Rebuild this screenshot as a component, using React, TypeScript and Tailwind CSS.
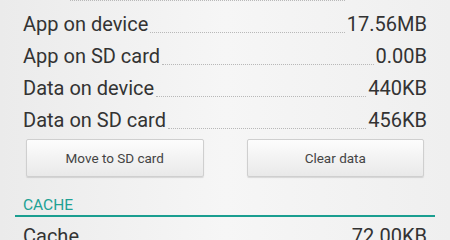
const rows = [
  { label: "Total", value: "18.00MB" },
  { label: "App on device", value: "17.56MB" },
  { label: "App on SD card", value: "0.00B" },
  { label: "Data on device", value: "440KB" },
  { label: "Data on SD card", value: "456KB" },
]

const SizeRow = ({ label, value }: { label: string; value: string }) => {
  return (
    <div className="flex flex-row items-baseline h-[32px] leading-[32px] text-[20px] text-[#333333]">
      <span className="whitespace-nowrap">{label}</span>
      <div className="flex-1 h-0 mx-[2px] border-b border-dotted border-[#b8b8b8] relative top-[2px]" />
      <span className="whitespace-nowrap">{value}</span>
    </div>
  )
}

const HoloButton = ({ children }: { children: string }) => {
  return (
    <button className="flex-1 h-[38px] rounded-[2px] border border-[#cfcfcf] bg-gradient-to-b from-[#fdfdfd] to-[#e9e9e9] shadow-[0_1px_1px_rgba(0,0,0,0.12)] text-[13.5px] text-[#444444]">
      {children}
    </button>
  )
}

export default function App() {
  return (
    <div className="w-[450px] h-[240px] overflow-hidden bg-gradient-to-r from-[#ebebeb] via-[#f6f6f6] to-[#efefef] font-['Roboto',sans-serif]">
      <div className="px-[23px] -mt-[24px]">
        {rows.map((row) => (
          <SizeRow key={row.label} label={row.label} value={row.value} />
        ))}
        <div className="flex flex-row gap-[43px] mx-[3px] mt-[3px]">
          <HoloButton>Move to SD card</HoloButton>
          <HoloButton>Clear data</HoloButton>
        </div>
      </div>
      <div className="mx-[15px] mt-[18px]">
        <div className="px-[8px] text-[15.5px] leading-[20px] text-[#20a193]">CACHE</div>
        <div className="h-[2px] bg-[#1a9e90]" />
      </div>
      <div className="px-[23px] mt-[3px]">
        <SizeRow label="Cache" value="72.00KB" />
      </div>
    </div>
  )
}
